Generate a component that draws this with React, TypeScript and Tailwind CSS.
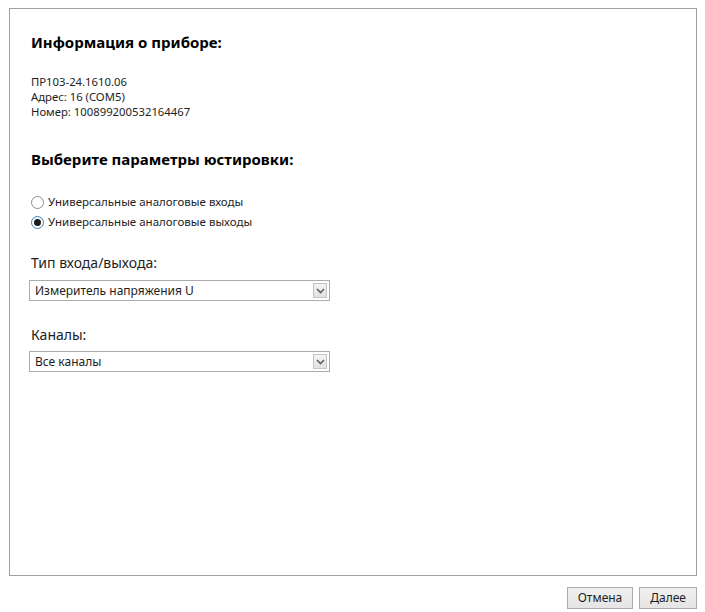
import React, { useState } from "react";

const font = { fontFamily: '"Noto Sans", "Segoe UI", sans-serif' };

function Chevron() {
  return (
    <svg width="9" height="6" viewBox="0 0 9 6" className="text-[#606060]">
      <path d="M1 1 L4.5 4.5 L8 1" fill="none" stroke="currentColor" strokeWidth="1.6" />
    </svg>
  );
}

function Select({ value }: { value: string }) {
  return (
    <div className="-ml-[2px] flex h-[21px] w-[301px] items-center border border-[#ababab] bg-white pl-[5px] pr-[2px]">
      <span className="flex-1 text-[12px] leading-none text-[#1e1e1e]">{value}</span>
      <span className="flex h-[15px] w-[14px] items-center justify-center border border-[#c5c5c5] bg-gradient-to-b from-[#f4f4f4] to-[#e2e2e2]">
        <Chevron />
      </span>
    </div>
  );
}

function Radio({ checked, label, onClick }: { checked: boolean; label: string; onClick: () => void }) {
  return (
    <label className="flex h-[20px] cursor-pointer items-center gap-[4px]" onClick={onClick}>
      <span
        className={
          checked
            ? "flex h-[13px] w-[13px] items-center justify-center rounded-full border border-[#3c7fb1] bg-white"
            : "flex h-[13px] w-[13px] items-center justify-center rounded-full border border-[#8e8f8f] bg-white"
        }
      >
        {checked ? <span className="h-[7px] w-[7px] rounded-full bg-[#1a1a1a]" /> : null}
      </span>
      <span className="text-[11.5px] text-[#1e1e1e]">{label}</span>
    </label>
  );
}

function Button({ children }: { children: React.ReactNode }) {
  return (
    <button className="h-[22px] border border-[#acacac] bg-gradient-to-b from-[#f0f0f0] to-[#e5e5e5] px-[10px] text-[12px] leading-none text-[#1e1e1e]">
      {children}
    </button>
  );
}

export default function App() {
  const [mode, setMode] = useState<"in" | "out">("out");

  return (
    <div className="flex h-[612px] w-[705px] flex-col bg-white" style={font}>
      <div className="ml-[9px] mt-[8px] flex h-[568px] w-[688px] flex-col border border-[#a0a0a0] pl-[21px] pt-[23px]">
        <h1 className="text-[15px] font-bold leading-[20px] text-black">Информация о приборе:</h1>
        <div className="mt-[22px] text-[11.3px] leading-[15px] text-[#1e1e1e]">
          <p>ПР103-24.1610.06</p>
          <p>Адрес: 16 (COM5)</p>
          <p>Номер: 100899200532164467</p>
        </div>

        <h1 className="mt-[30px] text-[15px] font-bold leading-[20px] text-black">Выберите параметры юстировки:</h1>
        <div className="mt-[23px] flex flex-col">
          <Radio checked={mode === "in"} label="Универсальные аналоговые входы" onClick={() => setMode("in")} />
          <Radio checked={mode === "out"} label="Универсальные аналоговые выходы" onClick={() => setMode("out")} />
        </div>

        <p className="mt-[22px] text-[14px] leading-[18px] text-[#1e1e1e]">Тип входа/выхода:</p>
        <div className="mt-[8px]">
          <Select value="Измеритель напряжения U" />
        </div>

        <p className="mt-[25px] text-[14px] leading-[18px] text-[#1e1e1e]">Каналы:</p>
        <div className="mt-[7px]">
          <Select value="Все каналы" />
        </div>
      </div>

      <div className="mr-[8px] mt-[11px] flex justify-end gap-[6px]">
        <Button>Отмена</Button>
        <Button>Далее</Button>
      </div>
    </div>
  );
}
